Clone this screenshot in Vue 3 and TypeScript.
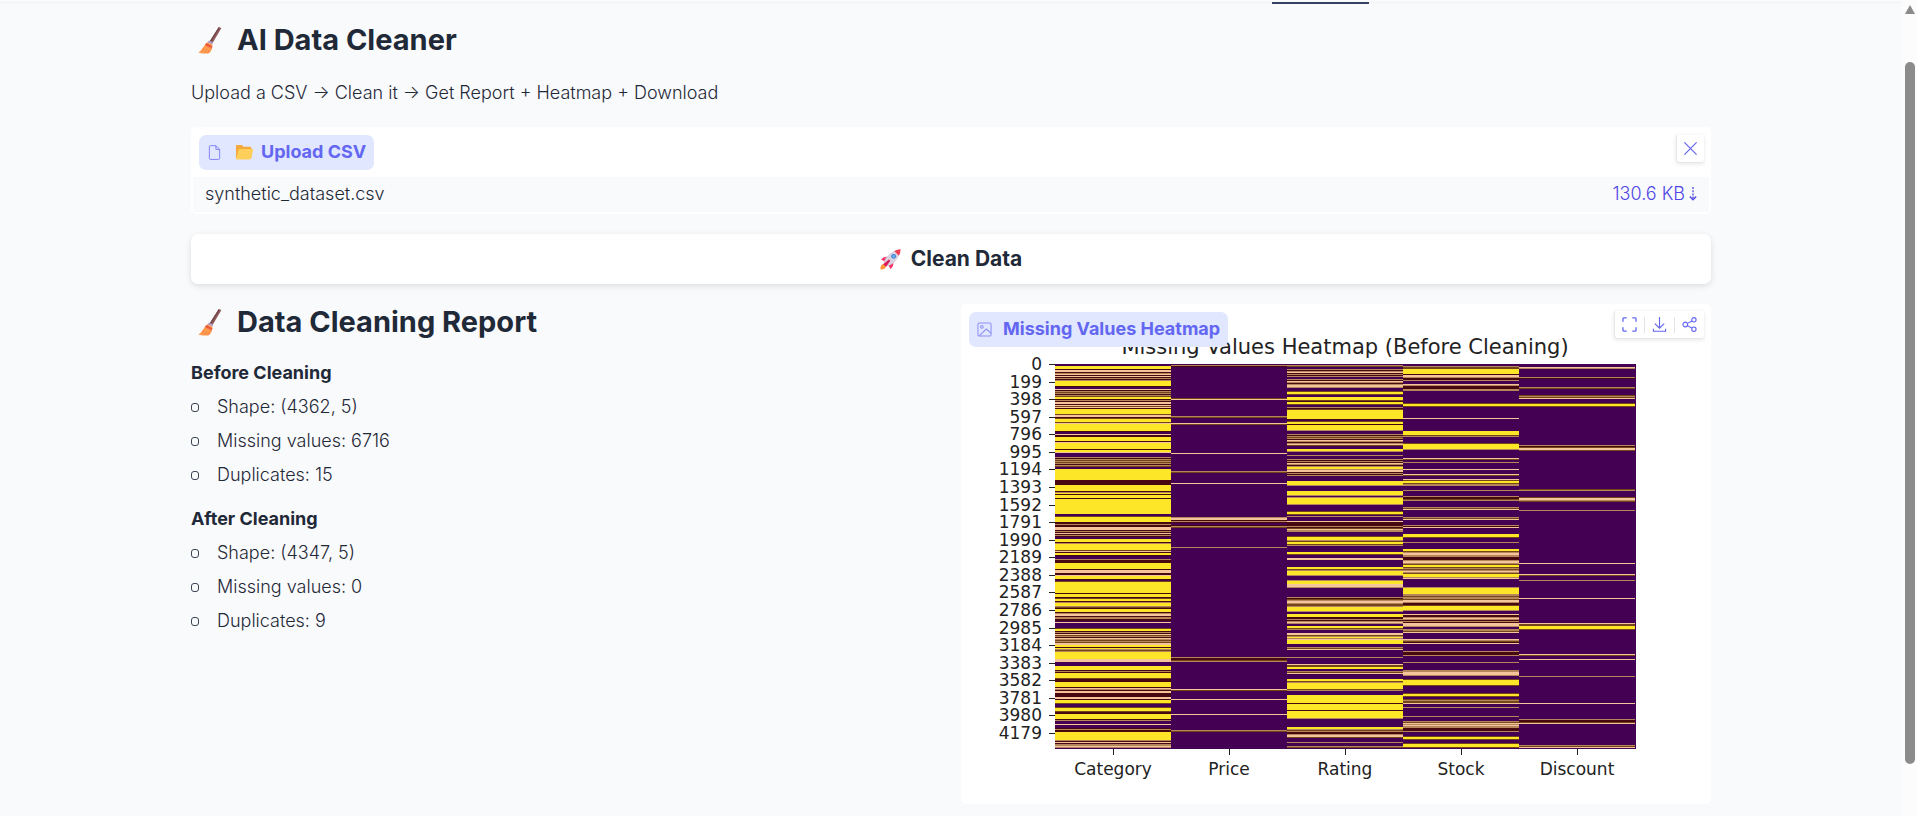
<script setup lang="ts">
interface Column {
  name: string
  rows: string
}
interface Band {
  y: number
  h: number
  fill: string
}

const palette: Record<string, string> = {
  y: '#fde528',
  o: '#f6c49b',
  t: '#b5855c',
  d: '#48080f',
  k: '#75451a',
}

// Each token is a start row followed by one letter per row.
const columns: Column[] = [
  {
    name: 'Category',
    rows:
      '2yyydoodtododtdtyyyyyd 25odtktdtkyydtdoodokodyyyyykoodkyyykoyyyyyyyd 70oddyyyydoyyyyyydyyo 93tdtktktdtk 105yyyyyyyyyyydddddyyyyyydtydyyyd ' +
      '135yyyyyyyyyyyyyyy 152kyyyyydd 160tddooodtdodtd 175yyydtyyyyyykodyyd 195tdddyyyyyydoooddoyyyd 217kyyyyyyyyyyydyyydkyydtyyytkdyyydtoodttdd 258o ' +
      '264kyydtdoktdotktkooyydytktyyyyyyyooo 302yyyydtdyyyyykddd 318yyyyydotdooddddoodyyyk 343kyyykdd 350yyyyydt 360o 364dtddyyyyyyyytdodttot',
  },
  { name: 'Price', rows: '1td 34ko 52tk 59ok 89o 107tk 119o 153toodtd 161dtk 183t 293tddkt 325ok 335o 350o 366tk' },
  {
    name: 'Rating',
    rows:
      '1tk 5tdtodtdt 15tdotdtoot 27kyyk 33yyykdyyk 43tdkyyyyyyyyyd 57kyydyyyyyt 70tdtktdotdt 80ok 85yyt 91t 95tdtdotd 102tyytoodtdt 117yyyyt 127yyyyt 133tyyyyyyt 147kyyk 152t 157oddddtdkott 172kyyyt 177kyykt 188yyk 194oo ' +
      '203yyktyyyyd 211t 216tyyyo 221oot 233tdktootkktyyyyt 250yyyddtdtot 262yykt 269ooktytoyyyy 283tko 293t 300okkyy 307tko 315yyktyyyyyykt 331yyyyyyyydyyyyyydyyyyyyyt 363yytktddtook 378t 382tk',
  },
  {
    name: 'Stock',
    rows:
      '2tkkyyyyydootddt 20otdddtt 39kyyk 54o 67yyyykt 79kyyyyyt 94ok 98t 105o 110ok 115okyyktt 126t 132tddkt 143tko 153tko 161tdo 170yyyk 178t 185yyk 188toottdddtootkyyktktotkyyytk 214o ' +
      '223tyyyyyyt 231tkttkootddkyyyyt 250oddtotdtdooot 265ttko 275otkdo 287tdddt 298t 306ttooot 315kyyyyyk 329kyyk 335ktkko 343t 352t 357tkotottdddt 372kyyk 379kyyyk',
  },
  {
    name: 'Discount',
    rows:
      '3ot 13td 23tk 31ktko 39kyyk 81tdkook 125kt 133kootk 146t 199o 210ok 216t 234o 259okkyyyk 290ok 295o 312t 339o 355tddko 381tko',
  },
]

const plotLeft = 94
const plotTop = 60
const columnWidth = 116
const plotHeight = 385

function toBands(rows: string): Band[] {
  const bands: Band[] = []
  for (const token of rows.split(' ')) {
    const match = /^(\d+)([a-z]+)$/.exec(token)
    if (!match) continue
    let row = Number(match[1])
    for (const run of match[2].match(/(.)\1*/g) ?? []) {
      bands.push({ y: row, h: run.length, fill: palette[run[0]] })
      row += run.length
    }
  }
  return bands.filter((band) => band.y + band.h <= plotHeight)
}

const heatmap = columns.map((column, i) => ({
  name: column.name,
  x: plotLeft + i * columnWidth,
  bands: toBands(column.rows),
}))

const ticks = Array.from({ length: 22 }, (_, i) => ({
  label: i * 199,
  y: Math.round(plotTop + 1 + (i * 369) / 21),
}))

const sections = [
  { title: 'Before Cleaning', items: ['Shape: (4362, 5)', 'Missing values: 6716', 'Duplicates: 15'] },
  { title: 'After Cleaning', items: ['Shape: (4347, 5)', 'Missing values: 0', 'Duplicates: 9'] },
]
</script>

<template>
  <div class="page">
    <svg class="defs" aria-hidden="true">
      <symbol id="broom" viewBox="0 0 24 28">
        <path d="M20.6 1.2 23.4 2 14.6 17 11.6 15.4Z" fill="#8d5a5c" />
        <path d="M20.6 1.2 21.8 1.5 12.8 16 11.6 15.4Z" fill="#6f4549" />
        <path d="M11 14.4 15.2 16.6 14.2 18.8 9.4 16.4Z" fill="#b39ac0" />
        <path d="M9.2 16.2 14.4 18.8C14.4 23 12.6 27.2 10 27.4 6.600 27.800 3 27.600.5 26.600 4 24 5.600 19.600 9.200 16.200Z" fill="#ff9d4f" />
        <path d="M8.400 17 14.300 20.200 14 22 6.800 18.900Z" fill="#e9573f" />
        <path d="M7.200 19.700 13.800 22.700M6 22 4 26.400M8.600 23 7 27M11.200 24 10 27.200" stroke="#f77a4a" stroke-width=".8" fill="none" />
      </symbol>
    </svg>
    <div class="content">
      <nav class="tabline" aria-label="Tabs"><span class="tab-active"></span></nav>
      <main class="container">
        <h1 class="title"><svg class="broom"><use href="#broom" /></svg>AI Data Cleaner</h1>
        <p class="intro">Upload a CSV → Clean it → Get Report + Heatmap + Download</p>

        <section class="card file-card">
          <div class="file-head">
            <div class="label">
              <svg class="ico" viewBox="0 0 16 16" fill="none" stroke="#7c7ff3" stroke-linejoin="round">
                <path d="M3.500.700H9.500L13.500 4.700V14Q13.500 15.400 12.200 15.400H3.800Q2.500 15.400 2.500 14V2Q2.500.700 3.500.700ZM9.500.700V4.700H13.500" />
              </svg>
              <svg class="folder" viewBox="0 0 18 16">
                <path d="M1 1H6.500L8 2.800H14.500Q16 2.800 16 4.300V14H.5V2Q.5 1 1 1Z" fill="#f5a93c" />
                <path d="M4.500 5H17Q18 5 17.700 6L15.500 14.500Q15.200 15.500 14 15.500H.5L3 6Q3.300 5 4.500 5Z" fill="#ffcf5c" />
              </svg>
              <span>Upload CSV</span>
            </div>
            <button class="tool close" type="button" aria-label="Clear">
              <svg class="ico" viewBox="0 0 16 16" fill="none" stroke="#6366f1" stroke-width="1.300">
                <path d="M1.500 1.500 14.500 14.500M14.500 1.500 1.500 14.500" />
              </svg>
            </button>
          </div>
          <div class="file-row">
            <span>synthetic_dataset.csv</span>
            <a href="#download" class="size">130.6 KB
              <svg class="down" viewBox="0 0 8 14" fill="none" stroke="#4f46e5" stroke-width="1.300">
                <path d="M4 0V12" stroke-dasharray="2 1.200" /><path d="M.8 9.500 4 12.800 7.200 9.500" />
              </svg>
            </a>
          </div>
        </section>

        <button class="clean" type="button">
          <svg class="rocket" viewBox="0 0 20 20">
            <path d="M.5 19.500Q0 15.500 3 14L6 17Q4.500 20 .5 19.500Z" fill="#ff9838" />
            <path d="M1 10Q3.500 6.500 8 7.500L5.500 12.500ZM12.500 12Q13.500 16.500 10 19L7.500 14.500Z" fill="#f8326b" />
            <path d="M3.500 13.500Q5.500 5.500 13.500 2L18 6.500Q14.500 14.500 6.500 16.500Z" fill="#d9d2e0" />
            <path d="M13.500 2Q16.500.500 19.700.300 19.500 3.500 18 6.500Z" fill="#f23a50" />
            <circle cx="13" cy="7" r="2.300" fill="#3f7fd0" /><circle cx="13" cy="7" r="1.300" fill="#67b4f5" />
            <path d="M3 14.500 8.500 10 9.800 11.300 5.800 17Z" fill="#d91b5c" />
          </svg>
          Clean Data
        </button>

        <div class="columns">
          <section class="report">
            <h2 class="title"><svg class="broom"><use href="#broom" /></svg>Data Cleaning Report</h2>
            <template v-for="section in sections" :key="section.title">
              <h3>{{ section.title }}</h3>
              <ul>
                <li v-for="item in section.items" :key="item">{{ item }}</li>
              </ul>
            </template>
          </section>

          <section class="card plot-card">
            <svg class="plot" viewBox="0 0 750 500" role="img" aria-label="Missing Values Heatmap">
              <text class="plot-title" x="384" y="50" text-anchor="middle">Missing Values Heatmap (Before Cleaning)</text>
              <g shape-rendering="crispEdges">
                <rect :x="plotLeft" :y="plotTop" :width="columnWidth * 5 + 1" :height="plotHeight" fill="#440154" />
                <g v-for="column in heatmap" :key="column.name">
                  <rect
                    v-for="band in column.bands"
                    :key="band.y"
                    :x="column.x"
                    :y="plotTop + band.y"
                    :width="columnWidth"
                    :height="band.h"
                    :fill="band.fill"
                  />
                  <rect :x="column.x + 58" :y="plotTop + plotHeight" width="1" height="6" fill="#222" />
                </g>
                <rect v-for="tick in ticks" :key="tick.label" x="88" :y="tick.y - 1" width="6" height="1" fill="#222" />
              </g>
              <text v-for="tick in ticks" :key="tick.label" class="axis" x="81" :y="tick.y + 5" text-anchor="end">{{ tick.label }}</text>
              <text v-for="column in heatmap" :key="column.name" class="axis" :x="column.x + 58" y="471" text-anchor="middle">{{ column.name }}</text>
            </svg>
            <div class="label plot-label">
              <svg class="ico" viewBox="0 0 16 16" fill="none" stroke="#8d90f5" stroke-width="1.100">
                <rect x="1" y="1" width="14" height="14" rx="1.500" /><circle cx="5.200" cy="5.200" r="1.400" />
                <path d="M2.500 14.500 10 7.500 15 12" />
              </svg>
              <span>Missing Values Heatmap</span>
            </div>
            <div class="tool toolbar">
              <button type="button" aria-label="Fullscreen">
                <svg class="ico" viewBox="0 0 16 16" fill="none" stroke="#6366f1" stroke-width="1.400">
                  <path d="M1 5V2Q1 1 2 1H5M11 1H14Q15 1 15 2V5M15 11V14Q15 15 14 15H11M5 15H2Q1 15 1 14V11" />
                </svg>
              </button>
              <button type="button" aria-label="Download">
                <svg class="ico" viewBox="0 0 16 16" fill="none" stroke="#6366f1" stroke-width="1.200">
                  <path d="M8 0V11.500M3 7 8 12 13 7M1.500 12.500V15.200H14.500V12.500" />
                </svg>
              </button>
              <button type="button" aria-label="Share">
                <svg class="ico" viewBox="0 0 16 16" fill="none" stroke="#6366f1" stroke-width="1.200">
                  <circle cx="3.500" cy="8" r="2.500" /><circle cx="12.700" cy="3" r="2.300" /><circle cx="12.700" cy="13" r="2.300" />
                  <path d="M5.800 6.800 10.600 4.200M5.800 9.200 10.600 11.800" />
                </svg>
              </button>
            </div>
          </section>
        </div>
      </main>
    </div>
    <div class="scrollbar" aria-hidden="true">
      <span class="arrow"></span>
      <span class="thumb"></span>
    </div>
  </div>
</template>

<style>
body {
  margin: 0;
  background: #f9fafb;
}
</style>

<style scoped>
* {
  box-sizing: border-box;
}
.page {
  display: flex;
  height: 100vh;
  overflow: hidden;
  background: #f9fafc;
  color: #1f2937;
  font-family: Inter, "Liberation Sans", sans-serif;
  font-size: 18px;
  font-weight: 300;
  line-height: 24px;
}
.defs {
  position: absolute;
  width: 0;
  height: 0;
}
.content {
  flex: 1;
  min-width: 0;
}
.tabline {
  display: flex;
  justify-content: flex-end;
  height: 4px;
  padding: 2px 28% 0 0;
  background: linear-gradient(#f9fafc 2px, #f1f2f5 2px, #f1f2f5 3px, #f9fafc 3px);
}
.tab-active {
  width: 97px;
  height: 2px;
  background: #374160;
}
.container {
  max-width: 1520px;
  margin: 0 auto;
}
.title {
  display: flex;
  align-items: center;
  gap: 15px;
  height: 36px;
  margin: 0;
  padding-left: 7px;
  font-size: 29px;
  line-height: 36px;
  font-weight: 700;
}
h1.title {
  margin-top: 18px;
}
.broom {
  width: 24px;
  height: 28px;
}
.intro {
  margin: 23px 0 22px;
}
.card {
  background: #fff;
  border-radius: 5px;
}
.file-card {
  padding: 8px 2px 2px;
}
.file-head {
  display: flex;
  justify-content: space-between;
  align-items: flex-start;
  height: 42px;
  padding: 0 5px 0 6px;
}
.label {
  display: flex;
  align-items: center;
  height: 35px;
  padding: 0 8px 1px;
  border-radius: 7px;
  background: #e0e7ff;
  color: #6366f1;
  font-weight: 700;
}
.ico {
  display: block;
  width: 15px;
  height: 15px;
}
.folder {
  width: 19px;
  height: 16px;
  margin: 0 7px 0 13px;
}
.tool {
  border: 1px solid #e5e7eb;
  border-width: 0 0 1px 1px;
  border-radius: 3px;
  background: #fff;
  box-shadow: 0 1px 4px #0000001a;
}
.close {
  display: grid;
  place-items: center;
  width: 28px;
  height: 28px;
  padding: 0 1px 1px 0;
}
.file-row {
  display: flex;
  justify-content: space-between;
  align-items: center;
  height: 35px;
  padding: 0 12px 1px;
  background: #f9fafb;
}
.size {
  display: flex;
  align-items: center;
  gap: 4px;
  color: #4f46e5;
  text-decoration: none;
}
.down {
  width: 8px;
  height: 14px;
}
.clean {
  display: flex;
  align-items: center;
  justify-content: center;
  gap: 10px;
  width: 100%;
  height: 50px;
  margin: 20px 0;
  border: 0;
  border-radius: 7px;
  background: #fff;
  box-shadow: 0 2px 6px #0000001f;
  color: inherit;
  font: inherit;
  font-size: 21px;
  font-weight: 700;
}
.rocket {
  width: 21px;
  height: 21px;
}
.columns {
  display: grid;
  grid-template-columns: 1fr 1fr;
  gap: 20px;
}
h3 {
  margin: 21px 0 0;
  font-size: 18px;
  font-weight: 700;
}
ul {
  margin: 10px 0 0;
  padding: 0;
  list-style: none;
}
li {
  display: flex;
  align-items: center;
  gap: 18px;
  height: 24px;
  margin-bottom: 10px;
}
li::before {
  content: "";
  width: 6px;
  height: 7px;
  border: 1px solid #3b4452;
  border-radius: 3px;
}
ul + h3 {
  margin-top: 20px;
}
.plot-card {
  position: relative;
}
.plot {
  display: block;
  width: 100%;
}
.plot-title,
.axis {
  font-family: "DejaVu Sans", sans-serif;
  font-size: 17px;
  font-weight: 400;
  fill: #222;
}
.plot-title {
  font-size: 21px;
}
.plot-label {
  position: absolute;
  top: 8px;
  left: 8px;
  gap: 11px;
}
.toolbar {
  position: absolute;
  top: 7px;
  right: 7px;
  display: flex;
  align-items: center;
  height: 28px;
}
.toolbar button {
  height: 16px;
  padding: 0 7px;
  border: 0;
  background: none;
}
.toolbar button + button {
  border-left: 1px solid #e2e4e9;
}
.scrollbar {
  display: flex;
  flex-direction: column;
  align-items: center;
  width: 15px;
  background: #fcfcfc;
}
.arrow {
  margin-top: 5px;
  border: 5px solid transparent;
  border-top: 0;
  border-bottom: 9px solid #8b8b8b;
}
.thumb {
  width: 10px;
  height: 86%;
  margin-top: 48px;
  border-radius: 5px;
  background: #8b8b8b;
}
</style>
